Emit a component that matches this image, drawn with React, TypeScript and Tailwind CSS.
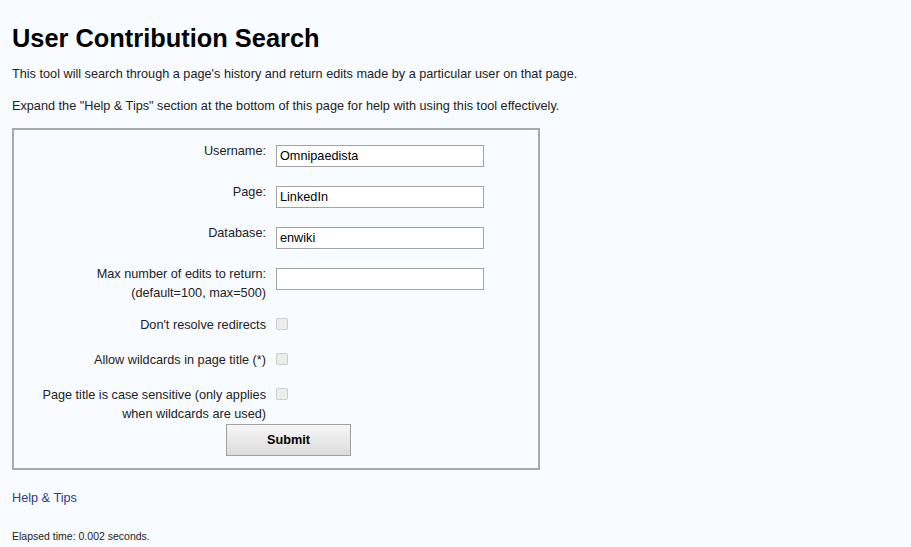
import React from 'react';

const font = { fontFamily: '"Liberation Sans", Arial, sans-serif' };

const TextRow: React.FC<{ label: React.ReactNode; value: string; h: string }> = ({ label, value, h }) => (
  <div className={`flex ${h}`}>
    <div className="w-[252px] pt-[1px] text-right leading-[19px]">{label}</div>
    <div className="ml-[10px] pt-[4.5px]">
      <input
        readOnly
        value={value}
        className="w-[208px] h-[22px] border border-[#a3a3a3] bg-white px-[3px] text-[12.7px] text-black outline-none"
      />
    </div>
  </div>
);

const CheckRow: React.FC<{ label: React.ReactNode; h: string }> = ({ label, h }) => (
  <div className={`flex ${h}`}>
    <div className="w-[252px] pt-[1px] text-right leading-[19px]">{label}</div>
    <div className="ml-[10px] pt-[3.5px]">
      <div className="w-[12px] h-[12px] rounded-[2px] border border-[#cdcdcd] bg-[#ededed]" />
    </div>
  </div>
);

export default function App() {
  return (
    <div className="min-h-[547px] bg-[#f8fbff] px-[12px] pt-[24px] text-[12.7px] text-[#222]" style={font}>
      <h1 className="text-[25.4px] font-bold leading-[28px] text-black">User Contribution Search</h1>
      <p className="mt-[12.5px] leading-[19px]">
        This tool will search through a page's history and return edits made by a particular user on that page.
      </p>
      <p className="mt-[13px] leading-[19px]">
        Expand the "Help &amp; Tips" section at the bottom of this page for help with using this tool effectively.
      </p>

      <div className="mt-[12.5px] w-[528px] border-2 border-[#a9a9a9] pt-[10.5px] pb-[12px]">
        <TextRow label="Username:" value="Omnipaedista" h="h-[41px]" />
        <TextRow label="Page:" value="LinkedIn" h="h-[41px]" />
        <TextRow label="Database:" value="enwiki" h="h-[41px]" />
        <TextRow
          label={
            <>
              Max number of edits to return:
              <br />
              (default=100, max=500)
            </>
          }
          value=""
          h="h-[51px]"
        />
        <CheckRow label="Don't resolve redirects" h="h-[35px]" />
        <CheckRow label="Allow wildcards in page title (*)" h="h-[35px]" />
        <CheckRow
          label={
            <>
              Page title is case sensitive (only applies
              <br />
              when wildcards are used)
            </>
          }
          h="h-[39.5px]"
        />
        <div className="ml-[212px]">
          <button className="w-[125px] h-[32px] border border-[#a0a0a0] bg-gradient-to-b from-[#f7f7f7] to-[#dcdcdc] pt-[2px] text-[12.7px] font-bold text-black">
            Submit
          </button>
        </div>
      </div>

      <div className="mt-[18.5px] leading-[19px] text-[#2b3a8c]">Help &amp; Tips</div>
      <div className="mt-[21px] text-[10.5px] leading-[14px] text-[#222]">Elapsed time: 0.002 seconds.</div>
    </div>
  );
}
